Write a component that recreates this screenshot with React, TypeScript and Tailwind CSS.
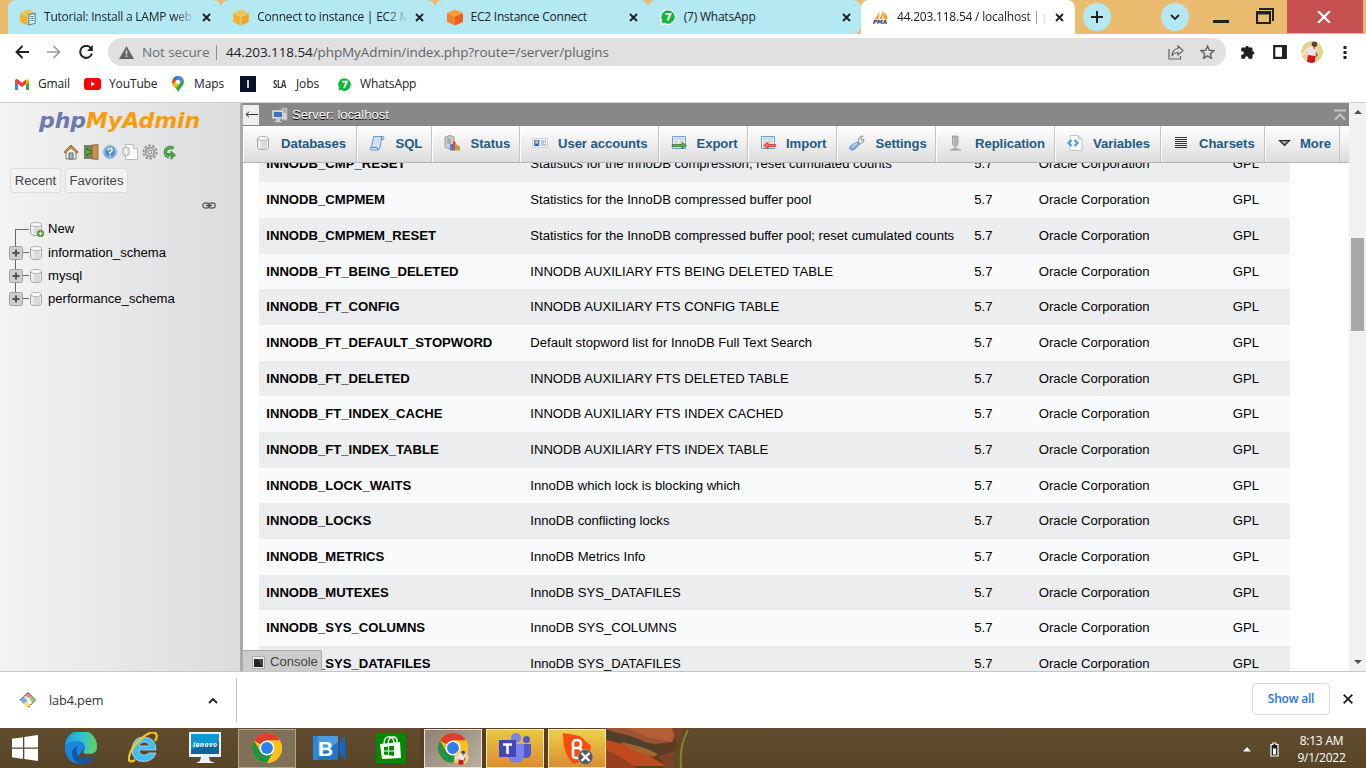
import React from "react";

const ui = "font-['Open_Sans','Noto_Sans',sans-serif]";

function CloseX({ className = "" }: { className?: string }) {
  return (
    <svg width="9" height="9" viewBox="0 0 9 9" className={`shrink-0 ${className}`}>
      <path d="M1 1l7 7M8 1l-7 7" stroke="#202124" strokeWidth="1.9" />
    </svg>
  );
}

function Cube({ doc = false, orange = false }: { doc?: boolean; orange?: boolean }) {
  if (orange) {
    return (
      <svg width="16" height="17" viewBox="0 0 16 17">
        <path d="M8 .5l8 3.500L8 7.500 0 4z" fill="#f99d33" />
        <path d="M0 4l8 3.500v9L0 13z" fill="#f5812a" />
        <path d="M16 4L8 7.500v9l8-3.500z" fill="#e8601c" />
      </svg>
    );
  }
  return (
    <svg width="16" height="17" viewBox="0 0 16 17">
      <path d="M8 .5l7.600 3.200L8 7 .4 3.700z" fill="#f7c14a" />
      <path d="M.2 4.200L7.600 7.400v9L.2 13z" fill="#f3b02a" />
      <path d="M15.800 4.200L8.400 7.400v9l7.400-3.400z" fill="#eeaa25" />
      {doc && (
        <g>
          <path d="M8.500 5l7-1.200v11l-7 1.700z" fill="#2f86c6" />
          <path d="M9.500 6l5-.8v8.700l-5 1.200z" fill="#fff" />
          <path d="M10.300 7.800l3.400-.5M10.300 9.800l3.400-.5M10.300 11.800l3.400-.6" stroke="#2f86c6" />
        </g>
      )}
    </svg>
  );
}

function WhatsSeven({ size = 16 }: { size?: number }) {
  return (
    <svg width={size} height={size} viewBox="0 0 16 16">
      <path d="M8 0a8 8 0 1 1-3.800 15.200L0 16l.9-4.100A8 8 0 0 1 8 0z" fill="#fff" />
      <path d="M8 1.200a6.800 6.800 0 1 1-3.600 12.600L1.600 14.500l.7-2.900A6.800 6.800 0 0 1 8 1.200z" fill="#12b83e" />
      <path d="M5.500 4.900h5L7.600 11.500" fill="none" stroke="#fff" strokeWidth="1.900" />
    </svg>
  );
}

function Pma() {
  return (
    <svg width="18" height="16" viewBox="0 0 18 16">
      <path d="M7 1Q6.500 6 1.500 10L6 10.500Q7.500 6 7 1zM10.500 0Q12 5 10 10.500L7.500 10Q10.500 5 10.500 0zM11 2q6 4 5.500 8.500L11.500 10Q12.500 5 11 2z" fill="#f79a2b" />
      <text x="0" y="15.500" fontSize="6.500" fontWeight="700" fontStyle="italic" fill="#333360" fontFamily="DejaVu Sans" textLength="16">PMA</text>
    </svg>
  );
}

function Tab({ icon, title, active = false, last = false, fade = false }: { icon: React.ReactNode; title: string; active?: boolean; last?: boolean; fade?: boolean }) {
  return (
    <div className={`relative flex h-[34px] shrink-0 items-center rounded-t-[8px] pl-[12px] ${active ? "w-[214px] bg-white" : "w-[213.250px] bg-[#b4e8f3]"} ${last ? "rounded-br-[8px]" : ""}`}>
      <span className="flex w-[16px] shrink-0 justify-center">{icon}</span>
      <span className={`ml-[8px] w-[149px] overflow-hidden whitespace-nowrap text-[12px] leading-[16px] tracking-[-0.220px] text-[#202124] ${fade ? "[mask-image:linear-gradient(to_right,black_130px,transparent_151px)]" : ""}`}>{title}</span>
      <CloseX className="ml-[9px]" />
      {!active && !last && <span className="absolute right-[-1px] top-[7px] h-[20px] w-px bg-[#6f8f96]" />}
    </div>
  );
}

const maps = (
  <svg width="12" height="16" viewBox="0 0 12 16">
    <path d="M6 0a6 6 0 0 1 5.600 8L6 16C5.500 13 .2 10 .2 6A6 6 0 0 1 6 0z" fill="#34a853" />
    <path d="M6 0a6 6 0 0 1 5.300 3.200L4 12C2 9.500.2 8.300.2 6A6 6 0 0 1 6 0z" fill="#fbbc04" />
    <path d="M6 0a6 6 0 0 1 5.300 3.200L7.900 7 4 4z" fill="#4285f4" />
    <path d="M1.500 2.200L4 4.300.7 8.300A6 6 0 0 1 1.500 2.200z" fill="#ea4335" />
    <path d="M1.500 2.200A6 6 0 0 1 6 0L4 4.500z" fill="#1a73e8" />
    <circle cx="6" cy="6" r="2.200" fill="#fff" />
  </svg>
);

function BrowserTop() {
  return (
    <div className={ui}>
      <div className="flex h-[34px] bg-[#ebbb70] pl-[8px]">
        <Tab icon={<Cube doc />} title="Tutorial: Install a LAMP web s" fade />
        <Tab icon={<Cube />} title="Connect to instance | EC2 Ma" fade />
        <Tab icon={<Cube orange />} title="EC2 Instance Connect" />
        <Tab icon={<WhatsSeven />} title="(7) WhatsApp" last />
        <div className="flex bg-[#ebbb70]">
          <Tab icon={<Pma />} title="44.203.118.54 / localhost | ph" active fade />
        </div>
        <div className="ml-[8px] mt-[3px] flex h-[28px] w-[28px] items-center justify-center rounded-full bg-[#b4e8f3]">
          <svg width="12" height="12"><path d="M6 0v12M0 6h12" stroke="#202124" strokeWidth="2" /></svg>
        </div>
        <div className="ml-[50px] mt-[3px] flex h-[28px] w-[28px] items-center justify-center rounded-full bg-[#b4e8f3]">
          <svg width="10" height="7"><path d="M1 1l4 4 4-4" fill="none" stroke="#202124" strokeWidth="1.800" /></svg>
        </div>
        <div className="ml-[24px] mt-[20px] h-[3px] w-[16px] bg-[#202124]" />
        <svg className="ml-[27px] mt-[8px]" width="18" height="16" viewBox="0 0 18 16">
          <path d="M3 1h14v12" fill="none" stroke="#202124" strokeWidth="2" />
          <path d="M1 4h13v11H1z" fill="none" stroke="#202124" strokeWidth="2" />
          <path d="M1 5h13" stroke="#202124" strokeWidth="3" />
        </svg>
        <div className="ml-[13px] flex h-[33px] w-[76px] items-center justify-center bg-[#c75050]">
          <svg className="mr-[2px]" width="14" height="12"><path d="M1 0l12 12M13 0L1 12" stroke="#fff" strokeWidth="2.200" /></svg>
        </div>
      </div>
      <div className="flex h-[36px] items-center bg-white pl-[15px]">
        <svg width="14" height="14" viewBox="0 0 14 14"><path d="M14 7H1.500M7.500 1L1.500 7l6 6" fill="none" stroke="#202124" strokeWidth="1.900" /></svg>
        <svg className="ml-[18px]" width="14" height="14" viewBox="0 0 14 14"><path d="M0 7h12.500M6.500 1l6 6-6 6" fill="none" stroke="#9b9b9b" strokeWidth="1.700" /></svg>
        <svg className="ml-[18px]" width="14" height="14" viewBox="0 0 14 14"><path d="M12 3.200A6 6 0 1 0 13 8.500" fill="none" stroke="#202124" strokeWidth="2" /><path d="M13.800 0v6H8z" fill="#202124" /></svg>
        <div className="ml-[15px] flex h-[28px] w-[1118px] items-center rounded-full bg-[#e0e0e0] pl-[11px]">
          <svg width="15" height="13" viewBox="0 0 15 13"><path d="M7.500 0L15 13H0z" fill="#5f6368" /><path d="M7.500 4.500V8.500M7.500 9.500V11" stroke="#e0e0e0" strokeWidth="1.500" /></svg>
          <span className="ml-[8px] w-[67px] whitespace-nowrap text-[13.500px] tracking-[-0.1px] text-[#6b6e72]">Not secure</span>
          <span className="ml-[7px] h-[15px] w-px bg-[#8b8e92]" />
          <span className="ml-[9px] flex-1 whitespace-nowrap text-[13.500px] tracking-[-0.090px] text-[#5f6368]"><span className="text-[#202124]">44.203.118.54</span>/phpMyAdmin/index.php?route=/server/plugins</span>
          <svg width="16" height="15" viewBox="0 0 16 15" fill="none" stroke="#5f6368" strokeWidth="1.200"><path d="M1 4v10h11.500v-3" /><path d="M10 1l5 4.500-5 4.500V7.500Q6 7.500 4 11q.5-7 6-7.500z" /></svg>
          <svg className="ml-[16px] mr-[11px]" width="15" height="14" viewBox="0 0 15 14"><path d="M7.500 1l1.800 4.300 4.700.4-3.600 3.100 1.100 4.600-4-2.500-4 2.500 1.100-4.600L1 5.700l4.700-.4z" fill="none" stroke="#5f6368" strokeWidth="1.400" /></svg>
        </div>
        <svg className="ml-[14px]" width="15" height="15" viewBox="0 0 24 24"><path fill="#202124" d="M20.500 10H20V6c0-1.100-.9-2-2-2h-4V3.500a2.500 2.500 0 0 0-5 0V4H4c-1.100 0-2 .9-2 2v4h1.500a2.700 2.700 0 0 1 0 5.400H2V20c0 1.100.9 2 2 2h4v-1.500a2.700 2.700 0 0 1 5.400 0V22H18c1.100 0 2-.9 2-2v-5h.5a2.500 2.500 0 0 0 0-5z" /></svg>
        <svg className="ml-[18px]" width="14" height="14"><path d="M1.200 1.200h11.600v11.600H1.200z" fill="none" stroke="#202124" strokeWidth="2.200" /><path d="M9 1h4v12H9z" fill="#202124" /></svg>
        <Avatar className="ml-[14px]" size={22} />
        <svg className="ml-[20px]" width="4" height="14"><path d="M.5 1h3v3h-3zM.5 6h3v3h-3zM.5 11h3v3h-3z" fill="#202124" /></svg>
      </div>
      <div className="flex h-[33px] items-center border-b border-[#cfcfcf] bg-white pb-[4px] pl-[15px] text-[12px] tracking-[-0.130px] text-[#202124]">
        <svg width="14" height="11" viewBox="0 0 14 11"><path d="M0 1.500V11h3V5z" fill="#4285f4" /><path d="M14 1.500V11h-3V5z" fill="#34a853" /><path d="M0 1.500Q1-.8 3 .6l4 3.200 4-3.200V5L7 8 3 5v1L0 3z" fill="#ea4335" /><path d="M11 .6q2-1.200 3 .9V3l-3 3z" fill="#fbbc04" /></svg>
        <span className="ml-[9px] w-[31px] whitespace-nowrap">Gmail</span>
        <svg className="ml-[15px]" width="17" height="12"><rect width="17" height="12" rx="3" fill="#f00" /><path d="M7 3.500v5L11 6z" fill="#fff" /></svg>
        <span className="ml-[8px] w-[46px] whitespace-nowrap">YouTube</span>
        <span className="ml-[17px]">{maps}</span>
        <span className="ml-[10px] w-[30px] whitespace-nowrap">Maps</span>
        <span className="ml-[16px] flex h-[16px] w-[16px] items-center justify-center bg-[#07132b]"><span className="h-[8px] w-[2px] bg-[#c8cdd5]" /></span>
        <span className="ml-[17px] w-[14px] origin-left scale-x-[.78] whitespace-nowrap text-[10px] font-bold tracking-[-0.4px] text-[#333]">SLA</span>
        <span className="ml-[9px] w-[24px] whitespace-nowrap">Jobs</span>
        <span className="ml-[17px]"><WhatsSeven size={15} /></span>
        <span className="ml-[8px] whitespace-nowrap">WhatsApp</span>
      </div>
    </div>
  );
}

function Avatar({ size, className = "" }: { size: number; className?: string }) {
  return (
    <svg className={`shrink-0 rounded-full ${className}`} width={size} height={size} viewBox="0 0 22 22">
      <circle cx="11" cy="11" r="11" fill="#e2d583" />
      <path d="M0 14l7-8 4-1 5 2 1 5-3 4-6-1-2-5-4 5z" fill="#efe2ea" />
      <circle cx="13.500" cy="3.300" r="2.700" fill="#5a4030" />
      <path d="M12 5l3 2-2 2z" fill="#b77b61" />
      <path d="M7 14l7 1v6q-4 2-8 0z" fill="#d0142c" />
      <path d="M15 10l2 4-3 4z" fill="#9a6a55" />
    </svg>
  );
}

function Db({ plus = false }: { plus?: boolean }) {
  return (
    <svg width="16" height="16" viewBox="0 0 16 16">
      <path d="M2.500 3.500v9q0 2 5.500 2t5.500-2v-9z" fill="#ededed" stroke="#a3a3a3" />
      <path d="M7 6v7.500M9 6v7.500M11 6v7" stroke="#c8c8c8" />
      <ellipse cx="8" cy="3.500" rx="5.500" ry="2" fill="#fff" stroke="#b0b0b0" />
      {plus && <g><circle cx="12.500" cy="12.500" r="3.300" fill="#5aa033" stroke="#3d7a1f" strokeWidth=".6" /><path d="M12.500 10.700v3.600M10.700 12.500h3.600" stroke="#fff" strokeWidth="1.200" /></g>}
    </svg>
  );
}

const sideIcons = [
  <svg width="16" height="16" viewBox="0 0 16 16"><path d="M3 7v8h10V7L8 3z" fill="#f4efe4" stroke="#8d7d68" /><path d="M8 1L0.800 8l1.400 1L8 3.700 13.800 9l1.400-1z" fill="#c98b4a" stroke="#8a5a28" strokeWidth=".8" /><path d="M6 9h4v6H6z" fill="#9bb9cc" stroke="#5e6870" /></svg>,
  <svg width="16" height="16" viewBox="0 0 16 16"><path d="M1 1h9v14H1z" fill="#6f8562" /><path d="M9 1l6-.5v15L9 15z" fill="#cc8f4d" stroke="#8b5f30" strokeWidth=".8" /><path d="M8 6.500H4.500V4L1 8l3.500 4V9.500H8z" fill="#5cb545" stroke="#2a7020" strokeWidth=".8" /></svg>,
  <svg width="16" height="16" viewBox="0 0 16 16"><circle cx="8" cy="8" r="6.500" fill="#4b87cc" stroke="#8fb4e0" /><circle cx="8" cy="8" r="5.300" fill="none" stroke="#d8e8f9" strokeWidth=".7" /><path d="M5.800 6.500Q6 4.500 8 4.500t2.200 1.700Q10.200 7.300 8 8.400V10M8 11v1.300" fill="none" stroke="#fff" strokeWidth="1.500" /></svg>,
  <svg width="16" height="16" viewBox="0 0 16 16"><path d="M3.500.5h8l4 4v11h-12z" fill="#fbfbfb" stroke="#bbb" /><path d="M11.500.5v4h4" fill="#eee" stroke="#bbb" /><path d="M1 4.500q3-2 6 0v6q-3 2-6 0z" fill="#ededed" stroke="#aaa" /></svg>,
  <svg width="16" height="16" viewBox="0 0 16 16"><circle cx="8" cy="8" r="6.600" fill="none" stroke="#979797" strokeWidth="2" strokeDasharray="2.600 1.550" /><circle cx="8" cy="8" r="4.300" fill="#ddd" stroke="#a2a2a2" strokeWidth="2.200" /><circle cx="8" cy="8" r="1.800" fill="#f5f5f5" stroke="#888" /></svg>,
  <svg width="16" height="16" viewBox="0 0 16 16"><path d="M12.500 4.500A5 5 0 1 0 8 13.200" fill="none" stroke="#2f7d2c" strokeWidth="3.400" /><path d="M12.500 4.500A5 5 0 1 0 8 13.200" fill="none" stroke="#62b958" strokeWidth="1.800" /><path d="M6 9.500h4V7l4.500 4L10 15.500v-3z" fill="#4da746" stroke="#2f7d2c" strokeWidth=".7" /></svg>,
];

function TreeRow({ label, first = false, last = false, height }: { label: string; first?: boolean; last?: boolean; height: string }) {
  return (
    <div className={`flex items-center ${height}`}>
      <div className="relative flex h-full w-[19px] items-center">
        <span className={`absolute left-[6px] w-px bg-[#666] ${first ? "bottom-0 h-1/2" : last ? "top-0 h-1/2" : "top-0 h-full"}`} />
        <span className={`absolute right-[-1px] h-px bg-[#666] ${first ? "w-[14px]" : "w-[12px]"}`} />
        {!first && (
          <svg className="relative" width="14" height="14"><rect x=".5" y=".5" width="13" height="13" rx="2" fill="#cfcfcf" stroke="#9e9e9e" /><path d="M7 3.500v7M3.500 7h7" stroke="#555" strokeWidth="2" /></svg>
        )}
      </div>
      <Db plus={first} />
      <span className="ml-[4px] whitespace-nowrap text-[13.120px] text-black">{label}</span>
    </div>
  );
}

function Sidebar() {
  return (
    <div className="flex w-[240px] shrink-0 flex-col bg-[linear-gradient(to_right,#f3f3f3,#dadcdd)]">
      <div className="pl-[39px] pt-[3px]">
        <span className="inline-block whitespace-nowrap font-['DejaVu_Sans'] text-[22px] font-bold italic leading-[30px] tracking-[-0.050px]"><span className="text-[#6c78af]">php</span><span className="text-[#f89c0e]">MyAdmin</span></span>
      </div>
      <div className="flex gap-[4px] pl-[63px] pt-[8px]">{sideIcons.map((icon, i) => <span key={i} className="h-[16px] w-[15.700px]">{icon}</span>)}</div>
      <div className="mt-[8px] flex gap-[4px] pl-[10px] text-[13.120px] text-[#444]">
        <span className="flex h-[25px] w-[51px] items-center justify-center rounded-[3px] border border-[#ddd] bg-[#f2f2f2]">Recent</span>
        <span className="flex h-[25px] w-[63px] items-center justify-center rounded-[3px] border border-[#ddd] bg-[#f2f2f2]">Favorites</span>
      </div>
      <svg className="ml-[202px] mt-[9px]" width="14" height="7" viewBox="0 0 14 7"><rect x=".8" y="1" width="6.500" height="5" rx="2.500" fill="none" stroke="#666" strokeWidth="1.400" /><rect x="6.700" y="1" width="6.500" height="5" rx="2.500" fill="none" stroke="#666" strokeWidth="1.400" /><path d="M4 3.500h6" stroke="#444" strokeWidth="1.400" /></svg>
      <div className="mt-[8px] pl-[9px]">
        <TreeRow label="New" first height="h-[24px]" />
        <TreeRow label="information_schema" height="h-[23px]" />
        <TreeRow label="mysql" height="h-[23px]" />
        <TreeRow label="performance_schema" last height="h-[23px]" />
      </div>
    </div>
  );
}

const sheet = (arrow: React.ReactNode) => (
  <svg width="16" height="16" viewBox="0 0 16 16">
    <path d="M1.500 1.500h13v12h-13z" fill="#fff" stroke="#6f9bd0" />
    <path d="M2.500 3.500h11" stroke="#b7cfec" strokeWidth="2" />
    <path d="M3 6h4M8 6h5M3 8h4M8 8h5M3 10h4M8 10h5M3 12h10" stroke="#a9b994" />
    {arrow}
  </svg>
);

const menu: { label: string; width: string; pad: string; gap: string; icon: React.ReactNode }[] = [
  { label: "Databases", width: "w-[113.500px]", pad: "pl-[12px]", gap: "ml-[10px]", icon: <Db /> },
  { label: "SQL", width: "w-[75px]", pad: "pl-[12px]", gap: "ml-[11px]", icon: <svg width="16" height="16" viewBox="0 0 16 16"><path d="M4.500 1.500h10q1 1 0 3h-2l-2 9.500q-.5 1-2 1h-7q-1-1 0-2.500h1z" fill="#cfe1f7" stroke="#6f96cc" /><path d="M1.500 12.500h6.500l1 2.500M12.500 4.500V1.500" fill="none" stroke="#4f7fc0" /></svg> },
  { label: "Status", width: "w-[88px]", pad: "pl-[12px]", gap: "ml-[11px]", icon: <svg width="16" height="16" viewBox="0 0 16 16"><path d="M1 2l5-1.500 4 1.500v10l-5 2-4-2z" fill="#cfcfcf" stroke="#999" /><path d="M3 4l4 0M3 6h4M3 8h4" stroke="#888" /><path d="M6 9h3v6.500H6z" fill="#3b83dd" /><path d="M9 6.500h2.500v9H9z" fill="#e8402c" /><path d="M11.500 9.500h2v6h-2z" fill="#ef8a1c" /><path d="M13.500 11h2.200v4.500h-2.200z" fill="#64b53a" /></svg> },
  { label: "User accounts", width: "w-[139px]", pad: "pl-[12px]", gap: "ml-[10.500px]", icon: <svg width="16" height="16" viewBox="0 0 16 16"><path d="M.5 3.500h15v9H.5z" fill="#f4f8fd" stroke="#c3d2e2" /><path d="M2 5h5.500v6H2z" fill="#4e86cf" /><circle cx="4.700" cy="7" r="1.500" fill="#f0c08e" /><path d="M3 11q1.700-4 3.500 0z" fill="#29508c" /><path d="M9 6h5M9 8h3M13 8h1M9 10h5" stroke="#7b95b3" /></svg> },
  { label: "Export", width: "w-[89px]", pad: "pl-[12px]", gap: "ml-[10px]", icon: sheet(<path d="M1 9.500h10V7.500l4.500 3L11 13.500v-2H1z" fill="#5da848" stroke="#2f7926" strokeWidth=".7" />) },
  { label: "Import", width: "w-[89px]", pad: "pl-[12px]", gap: "ml-[10.500px]", icon: sheet(<path d="M15.500 9.500H8V7L3.500 10.500 8 14v-2.500h7.500z" fill="#f56a6a" stroke="#d42525" strokeWidth=".7" />) },
  { label: "Settings", width: "w-[99.500px]", pad: "pl-[12px]", gap: "ml-[11px]", icon: <svg width="16" height="16" viewBox="0 0 16 16"><path d="M9 7l1-4q1.500-2.500 4-2l-2 2.500.7 1.500 2.300-.5q.5 3-3.500 4.500z" fill="#e5e5e5" stroke="#929292" /><path d="M8 7l2.500 2.300L5 14.700q-2.500 1-4-.7-.8-1.500.5-3z" fill="#88aee9" stroke="#6288c4" /><path d="M3 12l5-4" stroke="#c6dafb" strokeWidth="1.300" /></svg> },
  { label: "Replication", width: "w-[119px]", pad: "pl-[13px]", gap: "ml-[10px]", icon: <svg width="16" height="16" viewBox="0 0 16 16"><path d="M3.500 1v8.500L6 12V1zM7 1v10l2-1.500V1z" fill="#cfcfcf" stroke="#888" strokeWidth=".8" /><path d="M6 11v3M1 15h11M3.500 13.700h6" stroke="#aaa" strokeWidth="1.400" /></svg> },
  { label: "Variables", width: "w-[106px]", pad: "pl-[12px]", gap: "ml-[10px]", icon: <svg width="16" height="16" viewBox="0 0 16 16"><path d="M3 .5h8.500l3.500 3.500v11.500H3z" fill="#f8fafc" stroke="#c4c9ce" /><path d="M11.500.5v3.500H15" fill="#e7e7e7" stroke="#bbb" /><path d="M4.500 5L1.500 8l3 3M7.500 5l3 3-3 3" fill="none" stroke="#4a98ea" strokeWidth="2.200" /></svg> },
  { label: "Charsets", width: "w-[104px]", pad: "pl-[12px]", gap: "ml-[10px]", icon: <svg width="16" height="16" viewBox="0 0 16 16"><path d="M2 2.500h12M2 4.500h12M2 6.500h12M2 8.500h12M2 10.500h12M2 12.500h12" stroke="#333" /></svg> },
  { label: "More", width: "w-[75px]", pad: "pl-[12px]", gap: "ml-[7px]", icon: <svg width="16" height="16" viewBox="0 0 16 16"><path d="M2.500 5.500h10L7.500 10.500z" fill="#999" stroke="#222" strokeWidth="1.200" /></svg> },
];

const plugins: [string, string][] = [
  ["INNODB_CMP_RESET", "Statistics for the InnoDB compression; reset cumulated counts"],
  ["INNODB_CMPMEM", "Statistics for the InnoDB compressed buffer pool"],
  ["INNODB_CMPMEM_RESET", "Statistics for the InnoDB compressed buffer pool; reset cumulated counts"],
  ["INNODB_FT_BEING_DELETED", "INNODB AUXILIARY FTS BEING DELETED TABLE"],
  ["INNODB_FT_CONFIG", "INNODB AUXILIARY FTS CONFIG TABLE"],
  ["INNODB_FT_DEFAULT_STOPWORD", "Default stopword list for InnoDB Full Text Search"],
  ["INNODB_FT_DELETED", "INNODB AUXILIARY FTS DELETED TABLE"],
  ["INNODB_FT_INDEX_CACHE", "INNODB AUXILIARY FTS INDEX CACHED"],
  ["INNODB_FT_INDEX_TABLE", "INNODB AUXILIARY FTS INDEX TABLE"],
  ["INNODB_LOCK_WAITS", "InnoDB which lock is blocking which"],
  ["INNODB_LOCKS", "InnoDB conflicting locks"],
  ["INNODB_METRICS", "InnoDB Metrics Info"],
  ["INNODB_MUTEXES", "InnoDB SYS_DATAFILES"],
  ["INNODB_SYS_COLUMNS", "InnoDB SYS_COLUMNS"],
  ["INNODB_SYS_DATAFILES", "InnoDB SYS_DATAFILES"],
];

function Main() {
  return (
    <div className="relative flex w-[1106px] shrink-0 flex-col overflow-hidden bg-white">
      <div className="flex h-[23px] shrink-0 items-center bg-[#888]">
        <span className="mr-[13px] flex h-[20px] w-[16px] items-center justify-center bg-[#eee]">
          <svg width="13" height="7"><path d="M13 3.500H1M4 .8L1 3.500 4 6.200" fill="none" stroke="#333" /></svg>
        </span>
        <svg width="16" height="16" viewBox="0 0 16 16"><path d="M10 1h5v12h-5z" fill="#dadada" stroke="#aaa" /><path d="M11 3h3M11 5h3" stroke="#777" /><path d="M.5 3.500h11v8H.5z" fill="#d3d8df" stroke="#c0c5cc" /><path d="M2 5h8v5H2z" fill="#3f74bd" /><path d="M4 12h4v2H4zM2.500 14h7v1.300h-7z" fill="#ccc" /></svg>
        <span className="ml-[4px] flex-1 text-[13.120px] tracking-[-0.050px] text-white [text-shadow:0_1px_0_#000]">Server: localhost</span>
        <svg className="mr-[3px]" width="12" height="12"><path d="M0 1.500h12M1 10.500l5-5 5 5" fill="none" stroke="#c5c5c5" strokeWidth="2" /></svg>
      </div>
      <div className="flex h-[37px] shrink-0 border-b border-[#b5b5b5] bg-[linear-gradient(#fff,#dcdcdc)]">
        {menu.map((m) => (
          <div key={m.label} className={`flex shrink-0 items-center border-r border-[#c4c4c4] shadow-[inset_1px_0_0_#fff] ${m.width} ${m.pad}`}>
            <span className="mb-[2px] h-[16px] w-[16px] shrink-0">{m.icon}</span>
            <span className={`whitespace-nowrap text-[13.120px] font-bold tracking-[-0.060px] text-[#235a81] ${m.gap}`}>{m.label}</span>
          </div>
        ))}
      </div>
      <div className="flex-1 overflow-hidden">
        <div className="ml-[16px] mt-[-16.500px] w-[1031px]">
          {plugins.map(([name, desc], i) => (
            <div key={name} className={`grid h-[35.680px] grid-cols-[264px_444px_64.500px_194px_1fr] items-center pl-[7.300px] text-[13.120px] text-black ${i % 2 ? "bg-[#f8fafb]" : "bg-[#ebedee]"}`}>
              <span className="whitespace-nowrap font-bold">{name}</span>
              <span className="whitespace-nowrap">{desc}</span>
              <span>5.7</span>
              <span className="whitespace-nowrap">Oracle Corporation</span>
              <span>GPL</span>
            </div>
          ))}
        </div>
      </div>
      <div className="absolute bottom-0 left-0 flex h-[21px] w-[79px] items-center rounded-tr-[3px] border-r border-t border-[#aaa] bg-[#ccc] pl-[9px] text-[13.120px] text-[#444]">
        <svg className="mt-[2px]" width="13" height="13"><path d="M.5.500h12v12H.5z" fill="#eee" stroke="#aaa" /><path d="M2 3h9v8H2z" fill="#222" /><path d="M11 3v8L5 3z" fill="#444" /></svg>
        <span className="ml-[5px] mt-[2px] tracking-[-0.050px]">Console</span>
      </div>
    </div>
  );
}

function Chrome({ size = 30 }: { size?: number }) {
  return (
    <svg width={size} height={size} viewBox="0 0 48 48">
      <circle cx="24" cy="24" r="24" fill="#fbc116" />
      <path d="M24 24L3.200 12A24 24 0 0 1 44.800 12H24z" fill="#e33b2e" />
      <path d="M3.200 12A24 24 0 0 0 24 48L34.400 30 24 24 13.600 30z" fill="#229342" />
      <path d="M24 12h20.800A24 24 0 0 1 24 48l10.400-18z" fill="#fbc116" />
      <circle cx="24" cy="24" r="12" fill="#fff" />
      <circle cx="24" cy="24" r="9.500" fill="#2f7de9" />
    </svg>
  );
}

function Downloads() {
  return (
    <div className={`flex h-[57px] items-center border-t border-[#c6c6c6] bg-white ${ui}`}>
      <svg className="mb-[1px] ml-[20px]" width="16" height="16" viewBox="0 0 16 16"><path d="M8 0L12 4 8 8 4 4z" fill="#f0868a" /><path d="M4 4L8 8l-4 4L0 8z" fill="#7aa9ee" /><path d="M12 4L16 8 12 12 8 8z" fill="#8fd06f" /><path d="M8 8l4 4L8 16 4 12z" fill="#f7dc72" /><path d="M0 8L8 .5 15.500 8 8 15.500" fill="none" stroke="#222" strokeDasharray="1.500 1.500" /><path d="M5 4.500l6.500 6.500M9 6v6" stroke="#fff" strokeWidth="1.800" /></svg>
      <span className="ml-[13px] mt-[1px] w-[159px] text-[12.700px] tracking-[-0.1px] text-[#333]">lab4.pem</span>
      <svg width="10" height="7"><path d="M1 6l4-4 4 4" fill="none" stroke="#202124" strokeWidth="1.900" /></svg>
      <span className="ml-[18px] h-[44px] w-px bg-[#c0c0c0]" />
      <span className="mb-[2px] ml-auto flex h-[32px] w-[78px] items-center justify-center rounded-[4px] border border-[#dadce0] text-[12px] font-semibold tracking-[-0.2px] text-[#2a73e8]">Show all</span>
      <svg className="mb-[2px] ml-[13px] mr-[13px]" width="10" height="10"><path d="M.7.7l8.600 8.600M9.300.7L.7 9.300" stroke="#202124" strokeWidth="1.900" /></svg>
    </div>
  );
}

function Taskbar() {
  return (
    <div className={`relative flex h-[40px] items-center bg-[linear-gradient(#624c2e,#574427)] ${ui}`}>
      <svg className="absolute left-[420px] top-0" width="280" height="40" viewBox="0 0 280 40">
        <path d="M0 0h265l-1 16-6 24H0z" fill="#5c3d24" />
        <path d="M186 0l72 0-6 14-17 2q-20-2-49-15z" fill="#9b5431" />
        <path d="M206 0l52 0-6 14-15-3q-18-4-31-11z" fill="#b25f36" />
        <path d="M186 3q26 3 44 14l10 6q-12 1-25-5-18-6-29-10z" fill="#4d3f2a" />
        <path d="M186 12q30 6 60 26h-60z" fill="#c04a20" />
        <path d="M186 22q16 6 30 18h-30z" fill="#96401f" />
        <path d="M200 14q24 4 38 12l-4 3q-20-4-34-15z" fill="#a3622f" />
        <path d="M252 0l16 0-10 20zM238 28l20-6-4 18h-8z" fill="#7a4327" />
        <path d="M272 0q-10 14-8 40h-10q0-24 10-40z" fill="#5d4b24" />
        <path d="M268 2q-9 16-7 38" fill="none" stroke="#8f7c30" strokeWidth="2" />
      </svg>
      <svg className="ml-[12px]" width="26" height="26" viewBox="0 0 26 26"><path d="M0 3.800l11-1.600v10.300H0zM12.300 2L26 0v12.500H12.300zM0 13.700h11V24L0 22.300zM12.300 13.700H26V26l-13.700-2z" fill="#fff" /></svg>
      <svg className="ml-[27px]" width="32" height="32" viewBox="0 0 32 32">
        <defs><linearGradient id="eg" x1="0" x2="1"><stop offset="0" stopColor="#1b9de2" /><stop offset=".55" stopColor="#34c2d0" /><stop offset="1" stopColor="#62d454" /></linearGradient></defs>
        <path d="M16 0A16 16 0 0 1 32 15q0 7-8 7-5 0-6-2 2-2 2-5L10 29Q0 26 0 16A16 16 0 0 1 16 0z" fill="#1887dc" />
        <path d="M0 14A16 16 0 0 1 32 14.500q0 7.500-8 7.500-5 0-6-2 2-2 2-5 0-6-8-6Q4 9 0 14z" fill="url(#eg)" />
        <path d="M0 14q4-5 12-4 5 1 5 3-5 1-5 8 0 9 9 10-4 1-6 1Q0 31 0 14z" fill="#1887dc" />
        <path d="M13 13.500q-3 3-1 8 4 8 17 3.500l1 .5Q25 32 17 32 7 31 7 21q0-5 6-7.500z" fill="#1257a8" />
      </svg>
      <svg className="ml-[31px]" width="30" height="32" viewBox="0 0 30 32">
        <path d="M28 18H11q1 5 5.500 5 3 0 4-2H28q-3 8.500-12 8.500Q4 30 4 17 5 5 16 5q12 1 12 13zM11 14h10q0-4-5-4-4 0-5 4z" fill="#43bdf3" stroke="#baeaff" strokeWidth=".7" />
        <path d="M7 28Q0 32 1 25 3 15 14 6T28 2q2 2-1 7" fill="none" stroke="#f4c522" strokeWidth="2.300" />
      </svg>
      <svg className="ml-[31px]" width="32" height="32" viewBox="0 0 32 32">
        <path d="M0 0h32v25H0z" fill="#f1f1f1" /><path d="M2 2h28v20H2z" fill="#0c679f" /><path d="M2 2h28v8Q14 14 2 17z" fill="#0898d4" /><path d="M12 25h8l1 4 5 2H7l4-2z" fill="#f1f1f1" />
        <text x="4" y="14.500" fontSize="7" fontWeight="700" fontStyle="italic" fill="#fff" fontFamily="Open Sans" textLength="24">lenovo</text>
      </svg>
      <div className="ml-[17px] flex h-[39px] w-[58px] items-center justify-center border border-[#b0a48e] bg-[#807058]"><Chrome /></div>
      <svg className="ml-[17px]" width="32" height="26" viewBox="0 0 32 26"><path d="M0 1h25v24H0z" fill="#4a9be0" /><path d="M0 25L25 7v18z" fill="#2176c6" /><path d="M32 1v24q-6-5-6-12t6-12z" fill="#0968d2" /><path d="M0 1h5v24H0z" fill="#2f86d3" /><text x="5" y="20.500" fontSize="21" fontWeight="700" fill="#fff" fontFamily="Liberation Sans" textLength="14">B</text></svg>
      <svg className="ml-[31px]" width="30" height="30" viewBox="0 0 30 30"><path d="M0 0h30v30H0z" fill="#008a00" /><path d="M4 11l20-2 1 16-19 1z" fill="#fff" /><path d="M8 11q0-8 6-7 4 1 4 6M12 10q1-7 6-6 4 1 3 6" fill="none" stroke="#fff" strokeWidth="1.300" /><path d="M8 14l4-.5v4H8zM13 13.300l5-.6v4.800h-5zM8 18.500h4V22l-4-.5zM13 18.500h5v4.500l-5-.7z" fill="#008a00" /></svg>
      <div className="relative ml-[18px] flex h-[39px] w-[58px] items-center justify-center border border-[#ece5d5] bg-[linear-gradient(135deg,#8f8373,#b8ae9f)]">
        <Chrome /><Avatar size={15} className="absolute bottom-[2px] right-[12px]" />
      </div>
      <div className="relative ml-[4px] flex h-[39px] w-[58px] items-center justify-center border border-[#fff0b0] bg-[linear-gradient(#e8c840,#dd8c30)]">
        <svg width="32" height="31" viewBox="0 0 32 31"><circle cx="17" cy="5" r="5" fill="#7b83eb" /><circle cx="27.500" cy="6.500" r="3.500" fill="#5059c9" /><path d="M20 11h12v9q0 5-5 5-7 0-7-6z" fill="#5059c9" /><path d="M9 11h16v11q-1 8-8 8t-8-8z" fill="#7b83eb" /><path d="M0 7h17v17H0z" fill="#4348b4" /><path d="M4 11.500h9M8.500 11v10" stroke="#fff" strokeWidth="2.500" /></svg>
      </div>
      <div className="relative ml-[4px] flex h-[39px] w-[58px] items-center border border-[#fff0b0] bg-[linear-gradient(#ecd04a,#db8b30)] pl-[14px]">
        <svg width="31" height="33" viewBox="0 0 31 33"><path d="M0 1l17 3 11 10-2 12-15 6Q0 24 0 1z" fill="#ff4a0d" /><path d="M10 25V11q0-3 4-3t4 4q0 4-4 4h-3 4q4 0 4 5t-5 5q-4 0-4-2" fill="none" stroke="#fff" strokeWidth="2.600" /><circle cx="22.500" cy="25" r="7.500" fill="#58595b" stroke="#aaa" strokeWidth=".7" /><path d="M18.500 21l8 8M26.500 21l-8 8" stroke="#fff" strokeWidth="2.400" /></svg>
      </div>
      <svg className="ml-auto mt-[2px]" width="8" height="5"><path d="M4 0l4 4.500H0z" fill="#fff" /></svg>
      <svg className="ml-[19px] mt-[2px]" width="9" height="15" viewBox="0 0 9 15"><path d="M3 1h3v1.500h2v11.500H1V2.500h2z" fill="#222" stroke="#fff" strokeWidth="1.200" /><path d="M3 6.500h3v6H3z" fill="#fff" /></svg>
      <div className="ml-[16px] mr-[18px] mt-[2px] w-[53px] text-center text-[12px] leading-[17px] tracking-[-0.220px] text-white"><div className="whitespace-nowrap">8:13 AM</div><div className="whitespace-nowrap">9/1/2022</div></div>
    </div>
  );
}

export default function App() {
  return (
    <div className="flex h-[768px] w-[1366px] flex-col overflow-hidden bg-white font-['Liberation_Sans',Arial,sans-serif]">
      <BrowserTop />
      <div className="flex h-[568px] shrink-0">
        <Sidebar />
        <div className="w-[3px] shrink-0 bg-[#aaa]" />
        <Main />
        <div className="flex w-[17px] shrink-0 flex-col items-center bg-[#f1f1f1]">
          <svg className="mt-[7px]" width="8" height="4"><path d="M4 0l4 4H0z" fill="#505050" /></svg>
          <div className="mt-[124px] h-[93px] w-[13px] bg-[#a8a8a8]" />
          <svg className="mb-[7px] mt-auto" width="8" height="4"><path d="M4 4l4-4H0z" fill="#505050" /></svg>
        </div>
      </div>
      <Downloads />
      <Taskbar />
    </div>
  );
}
